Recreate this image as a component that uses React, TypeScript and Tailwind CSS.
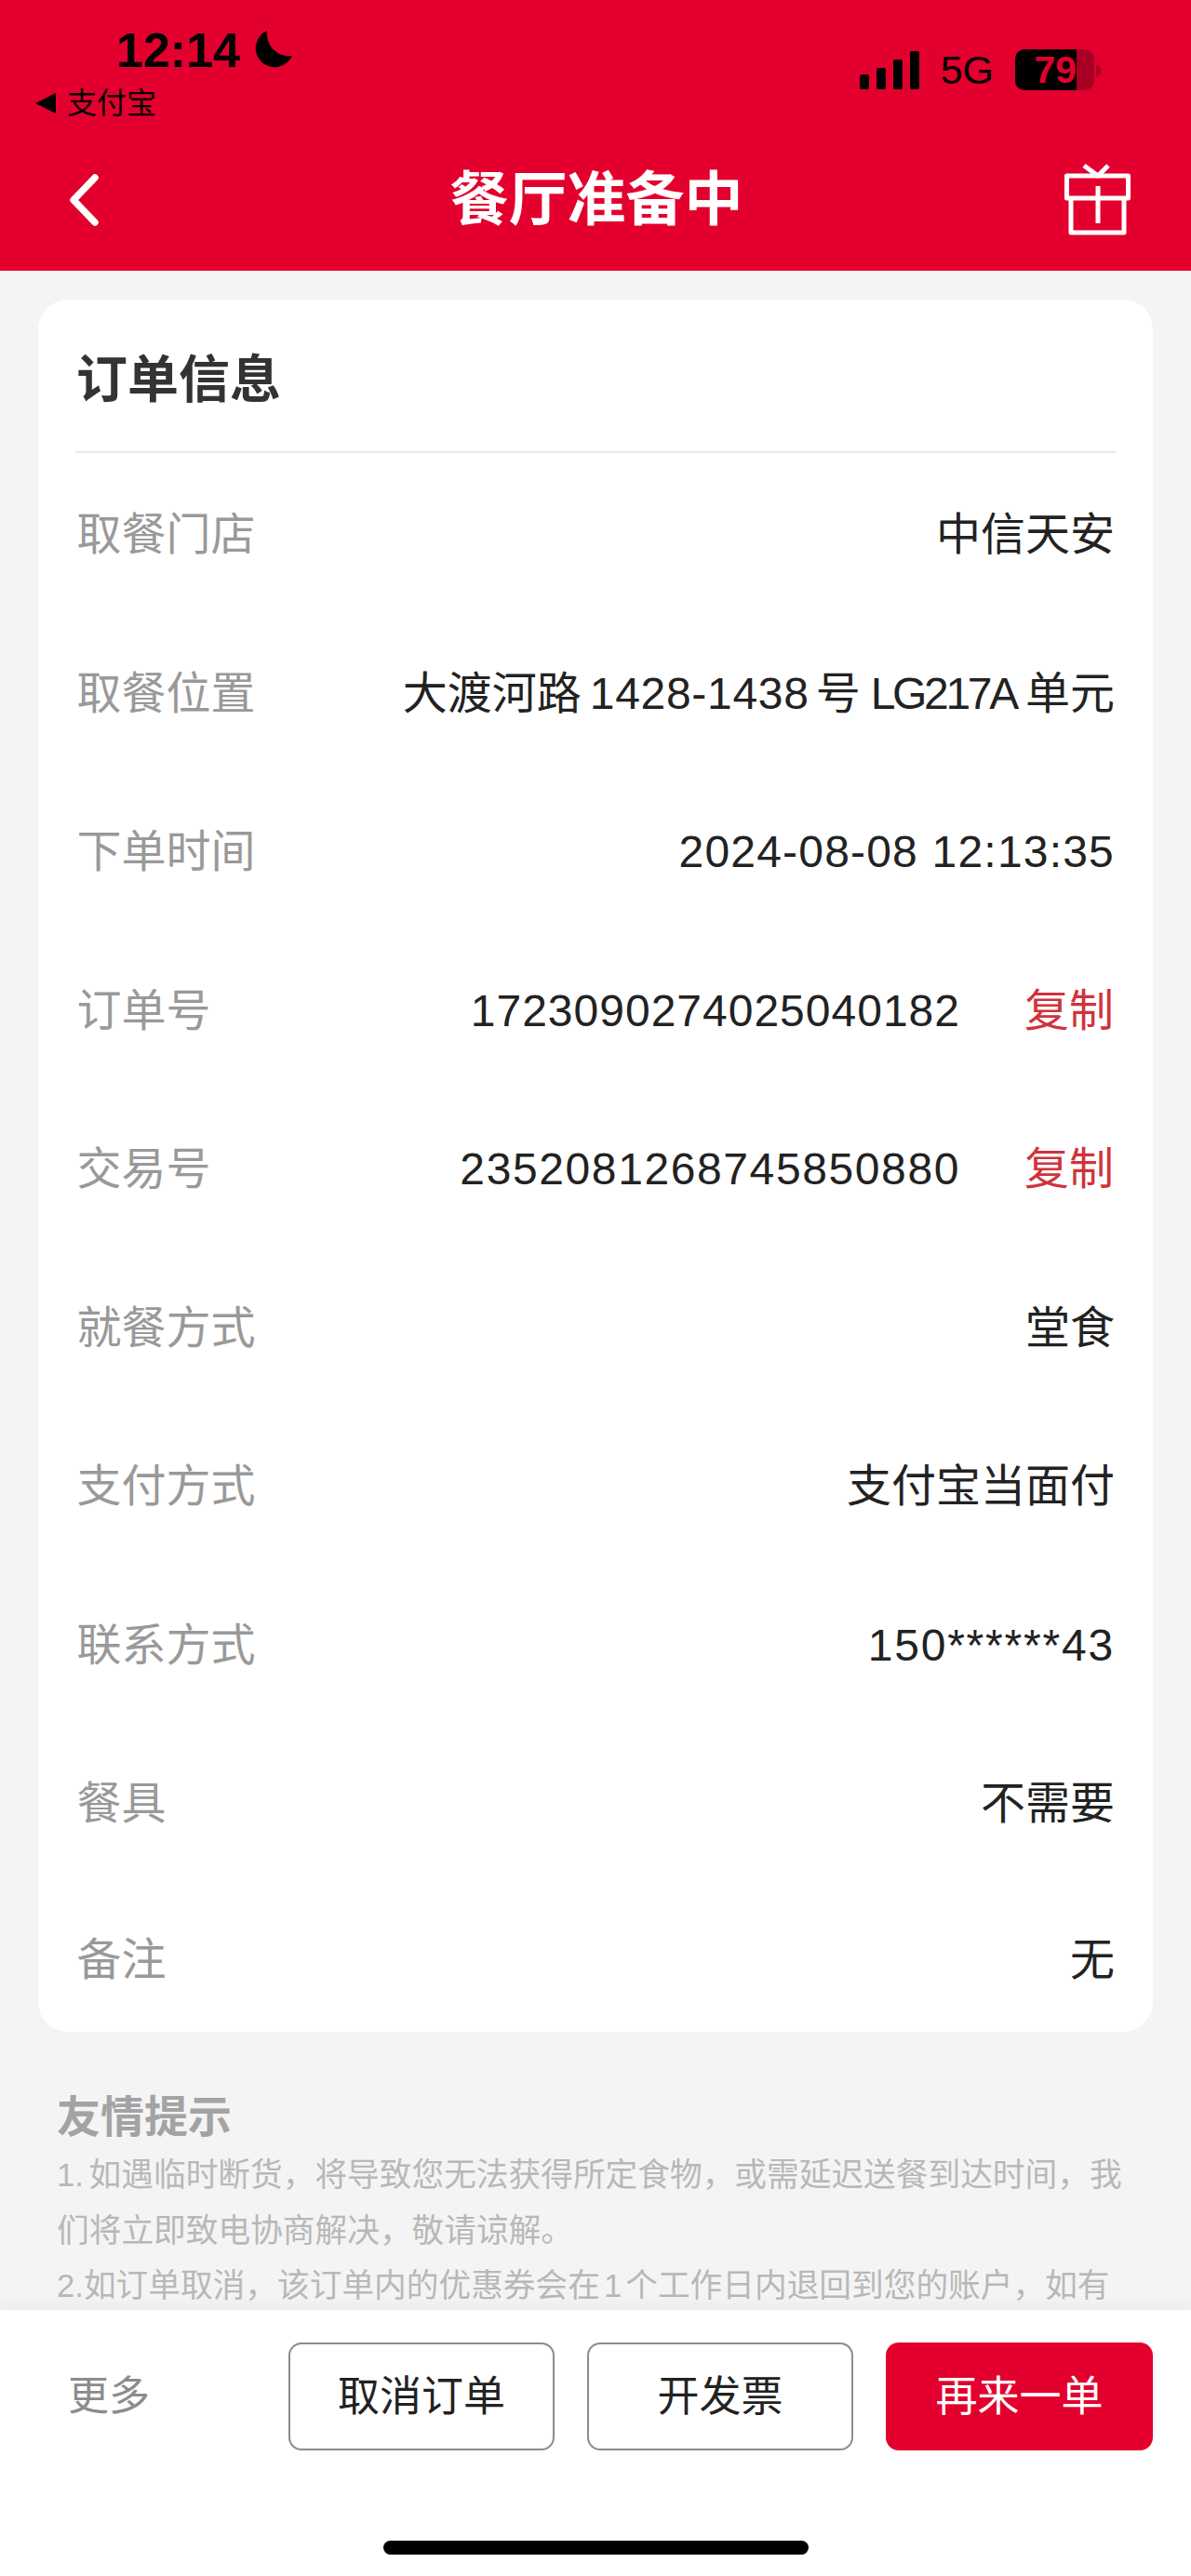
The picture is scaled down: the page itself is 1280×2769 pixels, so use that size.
import type { ReactNode } from "react";

const rows: { label: string; value: ReactNode; copy?: boolean }[] = [
  { label: "取餐门店", value: "中信天安" },
  {
    label: "取餐位置",
    value: (
      <>
        大渡河路
        <span className="mr-[7px] ml-[9px] tracking-[0.7px]">1428-1438</span>号
        <span className="mr-[10px] ml-[11px] tracking-[-3.3px]">LG217A</span>单元
      </>
    ),
  },
  { label: "下单时间", value: <span className="tracking-[1.2px]">2024-08-08 12:13:35</span> },
  { label: "订单号", value: <span className="tracking-[1px]">1723090274025040182</span>, copy: true },
  { label: "交易号", value: <span className="tracking-[1.6px]">2352081268745850880</span>, copy: true },
  { label: "就餐方式", value: "堂食" },
  { label: "支付方式", value: "支付宝当面付" },
  { label: "联系方式", value: <span className="tracking-[1.8px]">150******43</span> },
  { label: "餐具", value: "不需要" },
  { label: "备注", value: "无" },
];

function StatusBar() {
  return (
    <div className="flex h-[165px] justify-between text-black">
      <div className="flex flex-col pl-[38px] pt-[33px]">
        <div className="flex h-[41px] items-center gap-[15px] pl-[87px]">
          <span className="text-[52px] leading-none font-bold">12:14</span>
          <svg width="41" height="41" viewBox="0 0 41 41" fill="currentColor">
            <path d="M14 0A20.5 20.5 0 1 0 41 27A24 24 0 0 1 14 0Z" />
          </svg>
        </div>
        <div className="mt-[21px] flex h-[32px] items-center gap-[12px]">
          <svg width="22" height="22" viewBox="0 0 22 22" fill="currentColor">
            <path d="M22 0V22L0 11Z" />
          </svg>
          <span className="text-[32px] leading-none">支付宝</span>
        </div>
      </div>
      <div className="flex items-start pt-[53px] pr-[97px]">
        <div className="mt-[2px] flex h-[41px] items-end gap-[8px]">
          <span className="h-[16px] w-[10px] rounded-[2px] bg-black" />
          <span className="h-[23px] w-[10px] rounded-[2px] bg-black" />
          <span className="h-[32px] w-[10px] rounded-[2px] bg-black" />
          <span className="h-[41px] w-[10px] rounded-[2px] bg-black" />
        </div>
        <span className="ml-[23px] h-[44px] text-[43px] leading-[44px]">5G</span>
        <div className="ml-[23px] flex h-[44px] w-[85px] overflow-hidden rounded-[10px] bg-[#a80024]">
          <div className="flex h-full w-[66px] items-center justify-end bg-black">
            <span className="text-[41px] leading-none font-bold text-[#e3002e]">79</span>
          </div>
        </div>
        <span className="mt-[17px] ml-[2px] h-[12px] w-[5px] rounded-r-full bg-[#a80024]" />
      </div>
    </div>
  );
}

function NavBar() {
  return (
    <div className="grid h-[99px] grid-cols-[1fr_auto_1fr] items-center pr-[65px] pl-[75px]">
      <svg width="32" height="56" viewBox="0 0 32 56" fill="none">
        <path d="M27 4L4 28L27 52" stroke="white" strokeWidth="7.5" strokeLinecap="round" strokeLinejoin="round" />
      </svg>
      <span className="mr-[8px] text-[63px] leading-none font-bold text-white">餐厅准备中</span>
      <svg className="justify-self-end" width="71" height="78" viewBox="0 0 71 78" fill="none" stroke="white" strokeWidth="5" strokeLinejoin="round">
        <path d="M21 2L36 13L47 2" />
        <path d="M7 38V74H64V38" />
        <path d="M2.5 13H68.5V37H2.5Z" />
        <path d="M36 24V64" />
      </svg>
    </div>
  );
}

function InfoRow({ label, value, copy }: { label: string; value: ReactNode; copy?: boolean }) {
  return (
    <div className="flex h-[170.5px] items-center justify-between last:h-[165px]">
      <span className="text-[#999999]">{label}</span>
      <div className="flex items-center">
        <span className="text-[#222222]">{value}</span>
        {copy && <span className="mr-[1px] ml-[69px] text-[#d1323c]">复制</span>}
      </div>
    </div>
  );
}

export default function App() {
  return (
    <div
      lang="zh-CN"
      className="flex h-[2769px] w-[1280px] flex-col overflow-hidden bg-[#f4f4f4] font-['Liberation_Sans','Noto_Sans_CJK_SC',sans-serif]"
    >
      <header className="h-[291px] shrink-0 bg-[#e3002e]">
        <StatusBar />
        <NavBar />
      </header>

      <main className="min-h-0 flex-1 overflow-hidden px-[41px] pt-[31px]">
        <section className="h-[1862px] rounded-[32px] bg-white px-[40px]">
          <h2 className="flex h-[165px] items-center border-b-2 border-[#e8e8e8] pt-[10px] pl-[1px] text-[55px] leading-none font-bold text-[#333333]">
            订单信息
          </h2>
          <div className="pt-[3px] pr-[1px] pl-[1.5px] text-[48px] leading-none">
            {rows.map((row) => (
              <InfoRow key={row.label} {...row} />
            ))}
          </div>
        </section>

        <div className="pt-[66px] pr-[8px] pl-[20px] text-[#b8b8b8]">
          <h3 className="text-[47px] leading-[52px] font-bold text-[#a3a3a3]">友情提示</h3>
          <p className="mt-[7px] text-[34.7px] leading-[59.5px] [word-spacing:-4px]">
            1. 如遇临时断货，将导致您无法获得所定食物，或需延迟送餐到达时间，我们将立即致电协商解决，敬请谅解。
          </p>
          <p className="text-[34.7px] leading-[59.5px]">
            2.如订单取消，该订单内的优惠券会在<span className="mx-[4px]">1</span>个工作日内退回到您的账户，如有
          </p>
        </div>
      </main>

      <footer className="h-[286px] shrink-0 bg-white shadow-[0_-6px_14px_rgba(0,0,0,0.04)]">
        <div className="flex items-center pt-[35px] pr-[41px] pl-[73px]">
          <span className="text-[44px] leading-none text-[#8c8c8c]">更多</span>
          <div className="ml-auto flex gap-[35px]">
            <button className="h-[116px] w-[286px] rounded-[14px] border-2 border-[#8c8c8c] text-[45px] leading-none text-[#222222]">
              取消订单
            </button>
            <button className="h-[116px] w-[286px] rounded-[14px] border-2 border-[#8c8c8c] text-[45px] leading-none text-[#222222]">
              开发票
            </button>
            <button className="h-[116px] w-[287px] rounded-[14px] bg-[#e3002e] text-[45px] leading-none text-white">
              再来一单
            </button>
          </div>
        </div>
        <div className="mx-auto mt-[97px] h-[15px] w-[457px] rounded-full bg-black" />
      </footer>
    </div>
  );
}
